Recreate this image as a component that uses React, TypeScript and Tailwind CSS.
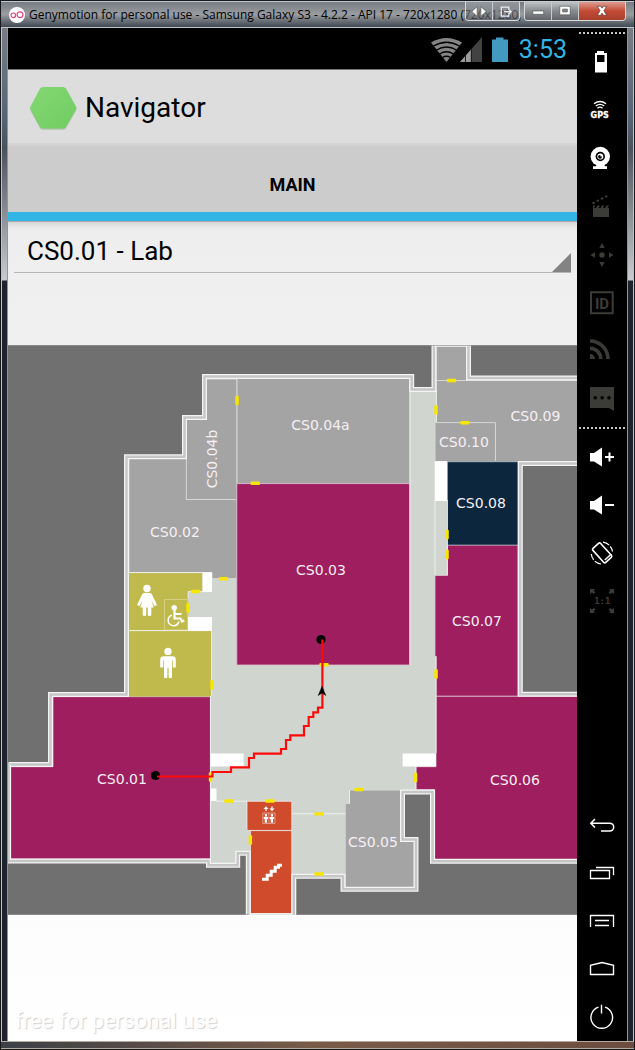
import type { ReactNode } from "react";

const WALLS = [
  "M8.5 764.5H50.5V694.5H126.5V456.7H184.5V417.5H204.5V376.5H411.7V389.5H434V345",
  "M8.5 764.5V861H208.5V865.3H237.7V853.2H248.3V916",
  "M293.8 916V876.2H343V889.3H416V839.5H402.5V792H432.5V861.3H580",
  "M468.5 345V378H580",
  "M580 463.5H520.3V694.2H580",
];

const DOORS_V: [number, number][] = [
  [237, 400.5], [436, 410], [447, 534.5], [447, 554.5], [188, 608],
  [212, 685], [210.5, 777], [436, 674], [415.5, 777.5], [250.3, 840],
];

const DOORS_H: [number, number][] = [
  [255.3, 483.3], [223.5, 578.7], [195.5, 591.5], [324, 664.7], [229, 801],
  [270, 801], [319, 813.9], [319, 874], [359, 789.5], [451.5, 380.5], [465, 422.8],
];

const LABELS: [string, number, number][] = [
  ["CS0.04a", 320.5, 430], ["CS0.03", 321, 575], ["CS0.02", 175, 537],
  ["CS0.09", 535.5, 421], ["CS0.10", 464, 447], ["CS0.08", 481, 508],
  ["CS0.07", 477, 626], ["CS0.06", 515, 785], ["CS0.05", 373, 847], ["CS0.01", 122, 784],
];

function FloorMap() {
  return (
    <svg viewBox="8 345 569 570" className="block w-full" role="img" aria-label="Ground floor map">
      <rect x="8" y="345" width="569" height="570" fill="#707070" />
      <path
        fill="#d0d5cf"
        d="M8.5 764.5H50.5V694.5H126.5V456.7H184.5V417.5H204.5V376.5H411.7V389.5H434V345H468.5V378H577V463.5H520.3V694.2H577V861.3H432.5V792H402.5V839.5H416V889.3H343V876.2H293.8V915H248.3V853.2H237.7V865.3H208.5V861H8.5Z"
      />
      <g fill="#a4a4a4" stroke="#d6d6d6" strokeWidth="1">
        <path d="M129 458H187V499.5H237V578.6H212V572.6H129Z" />
        <path d="M206 379H237V499.5H186.3V419H206Z" />
        <path d="M237 378.5H410V483.5H237Z" />
        <path d="M436.3 346.5H466.5V380.5H436.3Z" />
        <path d="M436.3 380.5H580V461.5H436.3Z" />
        <path d="M435 422.6H495.5V461.5H435Z" />
        <path d="M349.5 790H401V840H415V888H345.2V803.5H349.5Z" />
      </g>
      <g fill="#9e1e60" stroke="#dcc3d0" strokeWidth="0.8">
        <path d="M236.8 483.6H409.8V665H236.8Z" />
        <path d="M53 696.7H210.4V859H10.7V766.7H53Z" />
        <path d="M447.5 545H518V696.3H436V656.5H435V575.5H447.5Z" />
        <path d="M436 696.3H580V859.5H434.7V789.7H416V766.7H436Z" />
      </g>
      <path d="M447.3 461.8H518V545H447.3Z" fill="#0b263d" stroke="#a5afb6" strokeWidth="0.7" />
      <g fill="#c0b94b">
        <path d="M129 573H202.4V591.5H188.2V630.3H129Z" />
        <path d="M129 631H211.4V696.5H129Z" />
        <path d="M164.5 599.5H187.7V630H164.5Z" stroke="#dcd78f" strokeWidth="0.8" />
      </g>
      <g fill="#cf4b2c" stroke="#eee" strokeWidth="0.8">
        <path d="M247 801.3H291.8V830.4H247Z" />
        <path d="M250.4 830.6H291.8V913.5H250.4Z" />
      </g>
      <g stroke="#ecefeb" strokeWidth="1" fill="none">
        <path d="M129 572.6H212M129 630.6H212M188.2 591.6V599M188.2 591.6H212M211.7 630V696M210.5 696V865M216 801.2H247M292 813.8H345M410 379V665M436.3 390V422M435 461V575M447.3 500V575M436 656V753M415.8 766V789M349.5 790V803.5" />
      </g>
      <g fill="#fff">
        <path d="M202.5 572.6H212V591.7H202.5ZM188 617H212V630.8H188ZM210.7 753.4H243.6V766.6H210.7ZM210.7 788.4H216.5V801H210.7ZM402.7 753.4H436V766.6H402.7ZM435 461.2H447.2V501H435Z" />
      </g>
      {WALLS.map((d) => (
        <g key={d} fill="none">
          <path d={d} stroke="#f4f4f4" strokeWidth="5" />
          <path d={d} stroke="#c6c6c6" strokeWidth="2.4" />
        </g>
      ))}
      <path d="M434 346H468.5" stroke="#f0f0f0" strokeWidth="1" />
      <path d="M250 914H292" stroke="#f0f0f0" strokeWidth="1.4" />
      <path d="M8 345.3H577M8 914.7H248M296 914.7H577" stroke="#999" strokeWidth="0.8" />
      <g fill="#f7e600">
        {DOORS_V.map(([x, y]) => (
          <rect key={`${x}-${y}`} x={x - 1.7} y={y - 4.7} width="3.5" height="9.4" rx="1" />
        ))}
        {DOORS_H.map(([x, y]) => (
          <rect key={`${x}-${y}`} x={x - 4.7} y={y - 1.7} width="9.4" height="3.4" rx="1" />
        ))}
      </g>

      {/* women */}
      <g fill="#fff">
        <circle cx="147" cy="588.5" r="3.7" />
        <path d="M144 593H150Q151.5 593 152 594.5L157 605L154.600 606.300L151.500 600.500L153.700 607.500H151.300V614.800Q151.300 616 149.600 616Q147.800 616 147.800 614.800V607.500H146.200V614.800Q146.200 616 144.400 616Q142.700 616 142.700 614.800V607.500H140.300L142.500 600.500L139.400 606.300L137 605L142 594.500Q142.500 593 144 593Z" />
        {/* men */}
        <circle cx="168" cy="651.4" r="3.7" />
        <path d="M163.500 656.300H172.500Q175.800 656.300 175.800 659.500V667.500H172.800V660.500H172V677Q172 678.300 170.300 678.300Q168.600 678.300 168.600 677V668H167.400V677Q167.400 678.300 165.700 678.300Q164 678.300 164 677V660.500H163.200V667.500H160.200V659.500Q160.200 656.300 163.500 656.300Z" />
      </g>
      {/* accessible */}
      <circle cx="174.200" cy="607.700" r="2.700" fill="#fff" />
      <g fill="none" stroke="#fff">
        <path d="M174.500 610V618.500H180.500L182 621.500L184.300 620.500M174.500 614H181.500" strokeWidth="2.200" />
        <path d="M172 615A5.500 5.500 0 1 0 179 621.500" strokeWidth="1.500" />
      </g>
      {/* lift */}
      <g stroke="#fff" fill="none">
        <path d="M262.800 813H275V823.500H262.800ZM268.900 813V823.500" strokeWidth="0.700" opacity="0.600" />
        <path d="M265.900 816.500V822.700M271.900 816.500V822.700" strokeWidth="2.300" />
        <path d="M263.700 818H268.100M269.700 818H274.100" strokeWidth="1.800" />
        <path d="M266 807V811M272 806.500V810" strokeWidth="1.300" />
      </g>
      <path d="M263.500 809L266 806.300L268.500 809ZM269.500 808.500L272 811.300L274.500 808.500Z" fill="#fff" />
      <circle cx="265.900" cy="815" r="1.200" fill="#fff" />
      <circle cx="271.900" cy="815" r="1.200" fill="#fff" />
      {/* stairs */}
      <path d="M262 879.300H267.200V875.200H271.200V871.200H275.200V867.200H278.500V865.300H282" fill="none" stroke="#fff" strokeWidth="3" />

      <g fill="#f6eff3" fontFamily="DejaVu Sans, sans-serif" fontSize="14" textAnchor="middle">
        {LABELS.map(([name, x, y]) => (
          <text key={name} x={x} y={y}>{name}</text>
        ))}
        <text transform="translate(217.300 459) rotate(-90)">CS0.04b</text>
      </g>

      <circle cx="155.500" cy="775.500" r="4.600" />
      <circle cx="321" cy="639.500" r="4.600" />
      <path
        d="M157 776.500H212.500V772H231V767.400H249V758H254V753.600H281V749H286V740H290.300V735.300H304V726H308.700V717H313.300V712.300H318V707.600H322.400V639.500"
        fill="none"
        stroke="#fd0b0b"
        strokeWidth="2.200"
      />
      <path d="M322 686.500L318.200 695.500L322 693L325.800 695.500Z" stroke="#000" strokeWidth="0.500" />
    </svg>
  );
}

function ToolButton({ label, children, dim = false }: { label: string; children: ReactNode; dim?: boolean }) {
  return (
    <button
      type="button"
      aria-label={label}
      className={dim ? "block h-12 w-full text-[#3b3b37]" : "block h-12 w-full text-white"}
    >
      <svg viewBox="0 0 50 48" className="mx-auto block h-12 w-[50px]" fill="currentColor">
        {children}
      </svg>
    </button>
  );
}

function Dots() {
  return (
    <svg viewBox="0 0 50 2" className="block h-[2px] w-full" aria-hidden="true">
      <path d="M2 1H49" stroke="#c4c4c4" strokeWidth="2" strokeDasharray="2 2" />
    </svg>
  );
}

function Toolbar() {
  return (
    <aside aria-label="Device controls" className="flex w-[50px] shrink-0 flex-col bg-black">
      <div className="flex h-[10px] items-center"><Dots /></div>
      <ToolButton label="Battery">
        <path fillRule="evenodd" d="M20 13H27V15H30V34.500H18V15H20ZM20 17V24H27.500V17Z" />
      </ToolButton>
      <ToolButton label="GPS">
        <g fill="none" stroke="currentColor" strokeWidth="1.400">
          <path d="M17 17.800Q23 13.200 29 17.800M18.800 20Q23 16.800 27.200 20M20.500 22.100Q23 20.100 25.500 22.100" />
        </g>
        <text x="22.700" y="32" fontSize="8" fontWeight="700" fontFamily="DejaVu Sans, sans-serif" textAnchor="middle" stroke="currentColor" strokeWidth="0.300">GPS</text>
      </ToolButton>
      <ToolButton label="Camera">
        <circle cx="23.300" cy="22.500" r="9.700" />
        <path d="M20 30H27L28 32.300H30V35H16V32.300H19Z" />
        <circle cx="23.300" cy="22.500" r="4.700" fill="#000" />
        <circle cx="23.300" cy="22.500" r="3" />
        <circle cx="23" cy="22.800" r="1.900" fill="#000" />
        <circle cx="24.200" cy="21.700" r="0.900" />
      </ToolButton>
      <ToolButton dim label="Capture">
        <path d="M16 26.500H32V35H16ZM16 23.500H18.500L17 26H16ZM20.500 23.500H23L21.500 26H19ZM25 23.500H27.500L26 26H23.500ZM29.500 23.500H32L30.500 26H28Z" />
        <path d="M15 20.500L17 19.500L18.500 21L16 22.500ZM19 18.500L21.500 17.200L22.300 19L20.500 20ZM23.500 16.200L26 15L26.500 17L24.500 18ZM28 14L30 13L30.500 15L28.700 16Z" />
        <path d="M16 26H32V27H16Z" />
      </ToolButton>
      <ToolButton dim label="Remote control">
        <circle cx="25" cy="25" r="2.700" />
        <path d="M25 13L27.700 18H22.300ZM25 37L27.700 32H22.300ZM13.300 25L18 22.300V27.700ZM36.700 25L32 22.300V27.700Z" />
      </ToolButton>
      <ToolButton dim label="Identifiers">
        <path d="M14 14.300H35.700V35.300H14Z" fill="none" stroke="currentColor" strokeWidth="2" />
        <text x="25" y="30.500" fontSize="15" fontWeight="700" fontFamily="Roboto, sans-serif" textAnchor="middle">ID</text>
      </ToolButton>
      <ToolButton dim label="Network">
        <path d="M13 28A5 5 0 0 1 18 33H13Z" />
        <path d="M13 22.200A10.800 10.800 0 0 1 23.800 33M13 15A18 18 0 0 1 31 33" fill="none" stroke="currentColor" strokeWidth="3.600" />
      </ToolButton>
      <ToolButton dim label="Phone">
        <path d="M13 13H37V37L32 34H13Z" />
        <g fill="#000"><circle cx="18.300" cy="23.700" r="1.800" /><circle cx="25.200" cy="23.700" r="1.800" /><circle cx="32" cy="23.700" r="1.800" /></g>
      </ToolButton>
      <div className="flex h-[11px] items-center"><Dots /></div>
      <ToolButton label="Volume up">
        <path d="M13 20H17L25 14.500V33.500L17 28.500H13ZM28 23H31.500V19.500H33.500V23H37V25H33.500V28.500H31.500V25H28Z" />
      </ToolButton>
      <ToolButton label="Volume down">
        <path d="M13 20H17L25 14.500V33.500L17 28.500H13ZM28 23H37V25H28Z" />
      </ToolButton>
      <ToolButton label="Rotate">
        <g fill="none" stroke="currentColor">
          <rect x="20" y="14.500" width="10.400" height="19" rx="1.500" strokeWidth="1.600" transform="rotate(-42 25 24)" />
          <path d="M27.800 31L34.300 25" strokeWidth="1.500" />
          <path d="M26 13.200A11 11 0 0 1 35.500 22.500M24 35A11 11 0 0 1 14.300 25" strokeWidth="1.200" strokeDasharray="7 1.500" />
        </g>
      </ToolButton>
      <ToolButton dim label="Pixel perfect">
        <path d="M13 12H18L16.500 13.500L18.500 15.500L16.500 17L15 15.500L13 17ZM37 12H32L33.500 13.500L31.500 15.500L33.500 17L35 15.500L37 17ZM13 36H18L16.500 34.500L18.500 32.500L16.500 31L15 32.500L13 31ZM37 36H32L33.500 34.500L31.500 32.500L33.500 31L35 32.500L37 31Z" />
        <text x="25.300" y="27" fontSize="9" fontFamily="DejaVu Sans Mono, monospace" fontWeight="700" textAnchor="middle">1:1</text>
      </ToolButton>
      <div className="flex-1" />
      <ToolButton label="Back">
        <path d="M18 18L13.800 22.200L18 26.500M14 22.200H32.800A3.900 3.900 0 0 1 32.800 30H24" fill="none" stroke="currentColor" strokeWidth="1.500" />
      </ToolButton>
      <ToolButton label="Recent apps">
        <path d="M13.500 21.500H32.500V29.500H13.500ZM19 18.500H36.500V26.300" fill="none" stroke="currentColor" strokeWidth="1.300" />
      </ToolButton>
      <ToolButton label="Menu">
        <path d="M13.500 30V18.500H36.500V30M18 23.500H32M18 28.500H32" fill="none" stroke="currentColor" strokeWidth="1.300" />
      </ToolButton>
      <ToolButton label="Home">
        <path d="M13.500 29.500V20.200L25 17.500L36.500 20.200V29.500Z" fill="none" stroke="currentColor" strokeWidth="1.400" />
      </ToolButton>
      <ToolButton label="Power">
        <path d="M21.500 14.200A10.800 10.800 0 1 0 28 14.200M24.500 11.700V20.500" fill="none" stroke="currentColor" strokeWidth="1.400" />
      </ToolButton>
    </aside>
  );
}

function TitleBar() {
  return (
    <header className="relative flex h-[27px] items-center gap-1 border-t border-b border-t-[#c5c9cd] border-b-[#bfc5c9] bg-linear-to-b from-[#777c84] via-[#9a9da0] to-[#414954] pl-2">
      <svg viewBox="0 0 16 16" className="size-4 shrink-0" aria-hidden="true">
        <circle cx="8" cy="8" r="8" fill="#fff" />
        <g fill="none" stroke="#e2457c" strokeWidth="1.200"><circle cx="4.300" cy="8.300" r="2.300" /><circle cx="11" cy="7.800" r="2.900" /></g>
      </svg>
      <h1 className="overflow-hidden font-['Open_Sans',sans-serif] text-[12px] leading-4 whitespace-nowrap text-black">
        Genymotion for personal use - Samsung Galaxy S3 - 4.2.2 - API 17 - 720x1280 (720x1280, 3...
      </h1>
      <div className="absolute top-0 right-2 flex h-[19px] gap-1">
        <div className="flex overflow-hidden rounded-b border border-t-0 border-[#d6d8da]">
          <button type="button" aria-label="Move toolbar" className="w-[27px] border-r border-[#c9cccf] bg-linear-to-b from-[#a4a8ac99] to-[#5d636b99]">
            <svg viewBox="0 0 27 19" className="h-[18px] w-full"><path d="M11.500 5V15L6 10ZM15.500 5V15L21 10Z" fill="#fff" stroke="#555" strokeWidth="0.600" /></svg>
          </button>
          <button type="button" aria-label="Detach" className="w-[26px] bg-linear-to-b from-[#a4a8ac99] to-[#5d636b99]">
            <svg viewBox="0 0 26 19" className="h-[18px] w-full"><path d="M16 8V5.500H8V15H16V12.500M11 10.200H18M15.500 7.500L18.500 10.200L15.500 13" fill="none" stroke="#eee" strokeWidth="1.300" /></svg>
          </button>
        </div>
        <div className="flex overflow-hidden rounded-b border border-t-0 border-[#d6d8da]">
          <button type="button" aria-label="Minimize" className="w-[27px] border-r border-[#c9cccf] bg-linear-to-b from-[#c0c3c5] via-[#888b8e] to-[#60656a]">
            <svg viewBox="0 0 27 19" className="h-[18px] w-full"><path d="M8 9.500H19.500V13H8Z" fill="#fff" stroke="#444" strokeWidth="0.600" /></svg>
          </button>
          <button type="button" aria-label="Maximize" className="w-[27px] border-r border-[#c9cccf] bg-linear-to-b from-[#c0c3c5] via-[#888b8e] to-[#60656a]">
            <svg viewBox="0 0 27 19" className="h-[18px] w-full"><path d="M8 4.500H19V13.500H8ZM11 7.500V10.500H16V7.500Z" fillRule="evenodd" fill="#fff" stroke="#444" strokeWidth="0.600" /></svg>
          </button>
          <button type="button" aria-label="Close" className="w-[46px] bg-linear-to-b from-[#dd9c90] via-[#c34a35] to-[#a8402c]">
            <svg viewBox="0 0 46 19" className="h-[18px] w-full"><path d="M18 4.500H21.500L23 6.500L24.500 4.500H28L25 9.200L28 14H24.500L23 11.800L21.500 14H18L21 9.200Z" fill="#fff" stroke="#5d302a" strokeWidth="0.700" /></svg>
          </button>
        </div>
      </div>
    </header>
  );
}

function Phone() {
  return (
    <main className="flex min-w-0 flex-1 flex-col bg-linear-to-b from-[#eaeaea] to-white font-[Roboto,sans-serif] text-black">
      <div className="flex h-[42px] items-center justify-end border-b border-[#777] bg-black pt-[3px] pr-[10px]">
        <svg viewBox="0 0 78 26" className="h-[26px] w-[78px]" aria-hidden="true">
          <path d="M1 5.500Q16.500 -3.500 32 5.500L16.500 25Z" fill="#858585" />
          <path d="M3.500 9Q16.500 1.500 29.500 9M6.500 13Q16.500 7 26.500 13M9.500 17Q16.500 12.500 23.500 17M12.500 20.500Q16.500 18 20.500 20.500" fill="none" stroke="#000" strokeWidth="1.300" />
          <path d="M52 0V25H30Z" fill="#424242" />
          <path d="M41 12.500V25H30Z" fill="#9b9b9b" />
          <path d="M35.500 17V25M41.300 11V25" stroke="#111" strokeWidth="0.900" />
          <path d="M62 2.500H66V0.500H73.500V2.500H78V25H62Z" fill="#429ac1" />
        </svg>
        <time className="ml-[11px] text-[25px] leading-7 text-[#33b5e5]">3:53</time>
      </div>
      <div className="flex h-[73px] items-center gap-2 bg-[#dddddd] pt-[3px] pl-[21px]">
        <svg viewBox="0 0 48 44" className="h-11 w-12 shrink-0" aria-hidden="true">
          <defs>
            <linearGradient id="hex" x1="0" y1="0" x2="1" y2="1">
              <stop offset="0" stopColor="#85d774" />
              <stop offset="1" stopColor="#70cd61" />
            </linearGradient>
          </defs>
          <path d="M14 2H34Q36 2 37 3.500L47 21Q48 22.500 47 24L37 41.500Q36 43 34 43H14Q12 43 11 41.500L1.500 24Q0.500 22.500 1.500 21L11 3.500Q12 2 14 2Z" fill="#b5c2b1" transform="translate(0 0.800)" />
          <path d="M14 1H34Q36 1 37 2.500L47 20.500Q48 22 47 23.500L37 41Q36 42.500 34 42.500H14Q12 42.500 11 41L1.500 23.500Q0.500 22 1.500 20.500L11 2.500Q12 1 14 1Z" fill="url(#hex)" />
        </svg>
        <h2 className="text-[28px] leading-8">Navigator</h2>
      </div>
      <nav className="h-[79px] border-b border-[#a9a9a9] bg-[#cccccc]">
        <button type="button" className="block h-full w-full border-t-[3px] border-b-[9px] border-t-[#d2d2d2] border-b-[#33b5e5] pt-3 text-[18px] leading-6 font-bold">
          MAIN
        </button>
      </nav>
      <div className="px-[6px] pt-2 pb-[72px] shadow-[inset_0_8px_6px_-6px_#cccccc]">
        <div className="relative border-b border-[#b5b5b5]">
          <select aria-label="Destination" className="block h-[42px] w-full appearance-none bg-transparent pl-[13px] text-[26px] leading-[42px] outline-none" defaultValue="lab">
            <option value="lab">CS0.01 - Lab</option>
          </select>
          <svg viewBox="0 0 19 19" className="pointer-events-none absolute right-0 bottom-0 size-[19px]" aria-hidden="true">
            <path d="M19 0V19H0Z" fill="#838383" />
          </svg>
        </div>
      </div>
      <FloorMap />
      <p className="mt-auto px-[7px] pb-[6px] text-[22px] leading-7 text-white [text-shadow:1px_1px_1px_#cfcfcf]">free for personal use</p>
    </main>
  );
}

export default function App() {
  return (
    <div className="flex min-h-screen flex-col border border-[#16181c] bg-[#20262f]">
      <TitleBar />
      <div className="flex flex-1 bg-[linear-gradient(to_bottom,#777d85_0,#566476_90px,#4a525c_120px,#c9cbd0_252px,#1d242e_253px,#1d242e_100%)]">
        <div className="w-[7px] shrink-0 border-r border-l border-r-[#8d969e] border-l-[#bcc3c9]" />
        <Phone />
        <Toolbar />
        <div className="w-[7px] shrink-0 border-r border-l border-r-[#bcc3c9] border-l-[#8d969e]" />
      </div>
      <footer className="h-[8px] border-t border-b border-[#b5a89d] bg-linear-to-r from-[#3c4045] via-[#7a5b48] to-[#6b4e40]" />
    </div>
  );
}
